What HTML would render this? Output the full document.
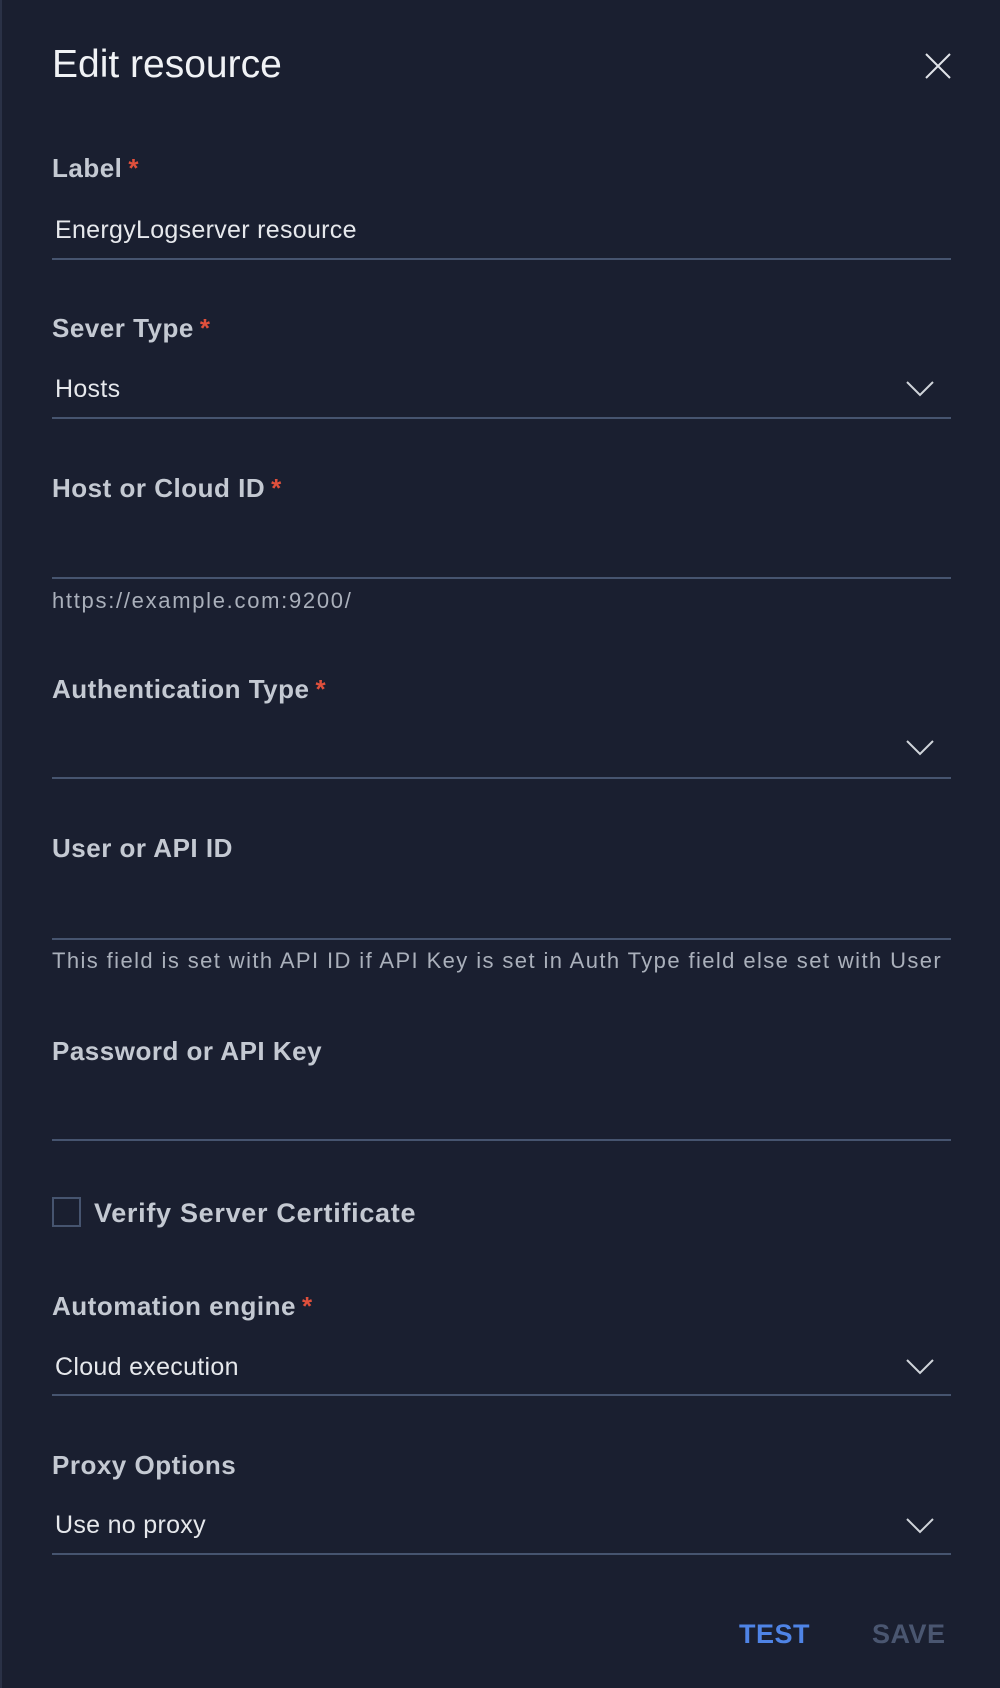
<!DOCTYPE html><html><head><style>
body{margin:0;width:1000px;height:1688px;background:#1a1f30;font-family:"Liberation Sans",sans-serif;position:relative;overflow:hidden;border-left:2px solid #2a3146;box-sizing:border-box}
.a{position:absolute;left:50px;white-space:nowrap}
.t{font-size:39px;color:#f0f2f5;top:43px}
.l{font-size:26px;font-weight:bold;color:#c4c9d2;letter-spacing:0.5px;line-height:30px}
.l i{font-style:normal;color:#e0503c;margin-left:6px}
.v{font-size:25px;color:#e6e8ec;left:53px;letter-spacing:0.3px;line-height:30px}
.h{font-size:22px;color:#aab0bb;letter-spacing:1.4px;line-height:26px}
.ln{position:absolute;left:50px;width:899px;height:2px;background:#46546f}
.ch{position:absolute;left:904px;width:28px;height:16px}
.btn{position:absolute;font-size:27px;font-weight:bold;line-height:30px;top:1619px;letter-spacing:0.5px}
</style></head><body>
<div class="a t">Edit resource</div>
<svg style="position:absolute;left:922px;top:52px" width="28" height="28"><path d="M2 2L26 26M26 2L2 26" stroke="#e0e3e8" stroke-width="2"/></svg>

<div class="a l" style="top:153px">Label<i>*</i></div>
<div class="a v" style="top:215px">EnergyLogserver resource</div>
<div class="ln" style="top:258px"></div>

<div class="a l" style="top:313px">Sever Type<i>*</i></div>
<div class="a v" style="top:374px">Hosts</div>
<svg class="ch" style="top:381px"><path d="M1 1L14 14L27 1" stroke="#d0d4da" stroke-width="2" fill="none"/></svg>
<div class="ln" style="top:417px"></div>

<div class="a l" style="top:473px">Host or Cloud ID<i>*</i></div>
<div class="ln" style="top:577px"></div>
<div class="a h" style="top:588px;letter-spacing:1.7px">https://example.com:9200/</div>

<div class="a l" style="top:674px">Authentication Type<i>*</i></div>
<svg class="ch" style="top:740px"><path d="M1 1L14 14L27 1" stroke="#d0d4da" stroke-width="2" fill="none"/></svg>
<div class="ln" style="top:777px"></div>

<div class="a l" style="top:833px">User or API ID</div>
<div class="ln" style="top:938px"></div>
<div class="a h" style="top:948px">This field is set with API ID if API Key is set in Auth Type field else set with User</div>

<div class="a l" style="top:1036px">Password or API Key</div>
<div class="ln" style="top:1139px"></div>

<div style="position:absolute;left:50px;top:1197px;width:29px;height:30px;border:2px solid #46546f;box-sizing:border-box"></div>
<div class="a l" style="left:92px;top:1198px;font-size:27px;letter-spacing:0.7px">Verify Server Certificate</div>

<div class="a l" style="top:1291px">Automation engine<i>*</i></div>
<div class="a v" style="top:1352px">Cloud execution</div>
<svg class="ch" style="top:1359px"><path d="M1 1L14 14L27 1" stroke="#d0d4da" stroke-width="2" fill="none"/></svg>
<div class="ln" style="top:1394px"></div>

<div class="a l" style="top:1450px">Proxy Options</div>
<div class="a v" style="top:1510px">Use no proxy</div>
<svg class="ch" style="top:1518px"><path d="M1 1L14 14L27 1" stroke="#d0d4da" stroke-width="2" fill="none"/></svg>
<div class="ln" style="top:1553px"></div>

<div class="btn" style="left:737px;color:#4f84e6">TEST</div>
<div class="btn" style="left:870px;color:#4a5670">SAVE</div>
</body></html>
